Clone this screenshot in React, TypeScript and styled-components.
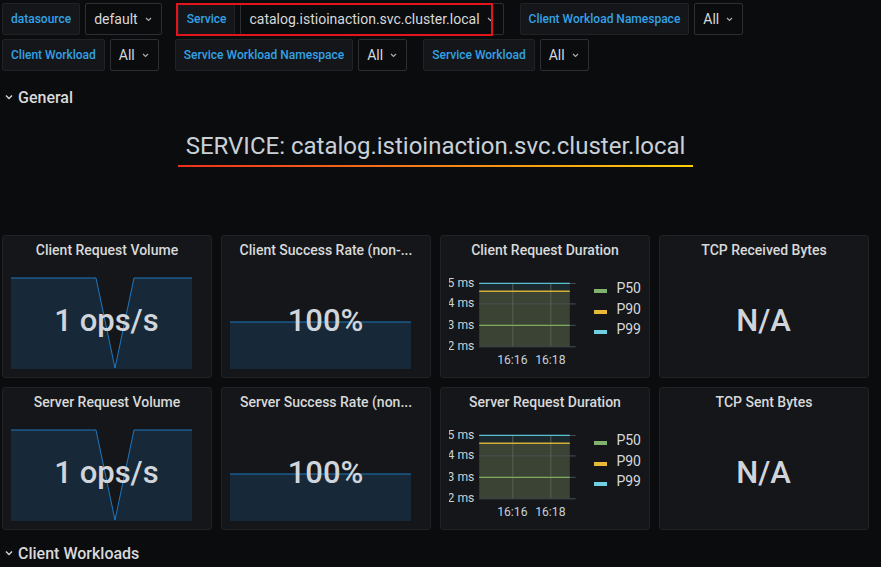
import { FC } from "react";
import styled, { createGlobalStyle } from "styled-components";

const GlobalStyle = createGlobalStyle`
  html, body {
    margin: 0;
    padding: 0;
    background: #0b0c0e;
  }
  body {
    font-family: Roboto, "Liberation Sans", sans-serif;
    color: #d8d9da;
    overflow: hidden;
  }
`;

const Page = styled.div`
  width: 867px;
  padding: 3px 0 0 2px;
`;

const VarBar = styled.div`
  display: flex;
  flex-wrap: wrap;
  row-gap: 4px;
`;

const VarGroup = styled.div<{ $highlight?: boolean }>`
  position: relative;
  display: flex;
  gap: 5px;
  margin-right: 16px;
  height: 32px;

  ${(p) =>
    p.$highlight
      ? `
    &::after {
      content: "";
      position: absolute;
      left: -2px;
      top: 0;
      right: 11px;
      bottom: -1px;
      border: 2px solid #e3141c;
      pointer-events: none;
    }
  `
      : ""}
`;

const VarLabel = styled.div`
  display: flex;
  align-items: center;
  padding: 0 8px;
  background: #141619;
  border: 1px solid #202226;
  border-radius: 2px;
  color: #33a2e5;
  font-size: 12px;
  font-weight: 500;
`;

const VarSelect = styled.div`
  display: flex;
  align-items: center;
  gap: 7px;
  padding: 0 9px 0 8px;
  border: 1px solid #2c3035;
  border-radius: 2px;
  font-size: 14px;
  color: #d8d9da;
`;

const Caret: FC = () => (
  <svg width="7" height="5" viewBox="0 0 7 5">
    <path d="M1 1 L3.5 3.5 L6 1" fill="none" stroke="#a6adb5" strokeWidth="1.2" />
  </svg>
);

const RowHeader = styled.div<{ $top: number }>`
  display: flex;
  align-items: center;
  gap: 5px;
  height: 20px;
  margin-top: ${(p) => p.$top}px;
  padding-left: 3px;
  font-size: 16px;
  font-weight: 500;
  color: #d8d9da;
`;

const TextPanel = styled.div`
  height: 119px;
  display: flex;
  justify-content: center;
  align-items: flex-start;
  padding-top: 25px;
  box-sizing: border-box;
`;

const HeadlineBox = styled.div`
  display: flex;
  flex-direction: column;
`;

const Headline = styled.div`
  padding: 0 8px 6px;
  font-size: 24px;
  line-height: 28px;
  color: #c8d0d8;
`;

const HeadlineRule = styled.div`
  height: 2px;
  margin-top: -1px;
  background: linear-gradient(90deg, #f0301c 0%, #f57a1a 45%, #fbd00b 100%);
`;

const Grid = styled.div`
  margin-top: 9px;
  display: grid;
  grid-template-columns: repeat(4, 210px);
  grid-auto-rows: 143px;
  gap: 9px;
`;

const Panel = styled.div`
  position: relative;
  display: flex;
  flex-direction: column;
  background: #141619;
  border: 1px solid #202226;
  border-radius: 3px;
  box-sizing: border-box;
  padding: 4px 8px 0;
`;

const PanelTitle = styled.div`
  height: 20px;
  line-height: 20px;
  text-align: center;
  font-size: 14px;
  font-weight: 500;
  color: #d8d9da;
  white-space: nowrap;
  overflow: hidden;
`;

const StatBody = styled.div`
  flex: 1;
  display: flex;
  align-items: center;
  justify-content: center;
  padding-top: 3px;
`;

const StatValue = styled.div`
  position: relative;
  font-size: 31px;
  font-weight: 500;
  color: #d0d5db;
  margin-right: 1px;
`;

const Spark = styled.svg`
  position: absolute;
  left: 8px;
  bottom: 8px;
`;

const GraphBody = styled.div`
  display: flex;
  align-items: flex-start;
  padding-top: 10px;
`;

const Legend = styled.div`
  display: flex;
  flex-direction: column;
  margin-left: 9px;
  padding-top: 8px;
`;

const LegendItem = styled.div`
  display: flex;
  align-items: center;
  gap: 9px;
  height: 20.5px;
  font-size: 14px;
  color: #d8d9da;
`;

const Swatch = styled.span<{ $color: string }>`
  display: inline-block;
  width: 13px;
  height: 4px;
  margin-top: 6px;
  background: ${(p) => p.$color};
`;

interface SparkProps {
  points: string;
}

const Sparkline: FC<SparkProps> = ({ points }) => (
  <Spark width="181" height="92" viewBox="0 0 181 92">
    <polygon points={`0,92 ${points} 181,92`} fill="#172838" />
    <polyline points={points} fill="none" stroke="#1f78c1" strokeWidth="1" />
  </Spark>
);

const StatPanel: FC<{ title: string; value: string; points?: string }> = ({
  title,
  value,
  points,
}) => (
  <Panel>
    <PanelTitle>{title}</PanelTitle>
    {points ? <Sparkline points={points} /> : null}
    <StatBody>
      <StatValue>{value}</StatValue>
    </StatBody>
  </Panel>
);

const axisText = { fill: "#c7d0d9", fontSize: 12.5, fontFamily: "Roboto, sans-serif" };

const DurationGraph: FC = () => (
  <svg width="140" height="100" viewBox="0 0 140 100">
    <rect x="31" y="12" width="93" height="8" fill="#1c2a30" />
    <rect x="31" y="20" width="93" height="57" fill="#3a4334" />
    {[12, 33, 55, 77].map((y) => (
      <line key={y} x1="31" x2="130" y1={y + 0.5} y2={y + 0.5} stroke="#4a4f55" strokeWidth="1" />
    ))}
    {[65, 104].map((x) => (
      <line key={x} x1={x + 0.5} x2={x + 0.5} y1="12" y2="77" stroke="#5a6152" strokeWidth="1" />
    ))}
    <line x1="31" x2="124" y1="12.5" y2="12.5" stroke="#5bbfd6" strokeWidth="1.3" />
    <line x1="31" x2="124" y1="20.5" y2="20.5" stroke="#d6ad35" strokeWidth="1.3" />
    <line x1="31" x2="124" y1="55.5" y2="55.5" stroke="#7eab5e" strokeWidth="1.3" />
    {["5 ms", "4 ms", "3 ms", "2 ms"].map((t, i) => (
      <text key={t} x="26" y={[12, 33, 55, 77][i] + 4} textAnchor="end" {...axisText}>
        {t}
      </text>
    ))}
    <text x="65" y="95" textAnchor="middle" {...axisText}>16:16</text>
    <text x="104" y="95" textAnchor="middle" {...axisText}>16:18</text>
  </svg>
);

const GraphPanel: FC<{ title: string }> = ({ title }) => (
  <Panel>
    <PanelTitle>{title}</PanelTitle>
    <GraphBody>
      <DurationGraph />
      <Legend>
        <LegendItem>
          <Swatch $color="#7eb26d" />
          P50
        </LegendItem>
        <LegendItem>
          <Swatch $color="#eab839" />
          P90
        </LegendItem>
        <LegendItem>
          <Swatch $color="#6ed0e0" />
          P99
        </LegendItem>
      </Legend>
    </GraphBody>
  </Panel>
);

const SectionCaret: FC = () => (
  <svg width="8" height="6" viewBox="0 0 8 6">
    <path d="M1 1.5 L4 4.5 L7 1.5" fill="none" stroke="#d8d9da" strokeWidth="1.3" />
  </svg>
);

const VOLUME = "0,1 85,1 104,91 123,1 181,1";
const RATE = "0,45 181,45";

const variables = [
  { label: "datasource", value: "default" },
  { label: "Service", value: "catalog.istioinaction.svc.cluster.local", highlight: true },
  { label: "Client Workload Namespace", value: "All" },
  { label: "Client Workload", value: "All" },
  { label: "Service Workload Namespace", value: "All" },
  { label: "Service Workload", value: "All" },
];

export default function App() {
  return (
    <>
      <GlobalStyle />
      <Page>
        <VarBar>
          {variables.map((v) => (
            <VarGroup key={v.label} $highlight={v.highlight}>
              <VarLabel>{v.label}</VarLabel>
              <VarSelect>
                {v.value}
                <Caret />
              </VarSelect>
            </VarGroup>
          ))}
        </VarBar>

        <RowHeader $top={16}>
          <SectionCaret />
          General
        </RowHeader>

        <TextPanel>
          <HeadlineBox>
            <Headline>SERVICE: catalog.istioinaction.svc.cluster.local</Headline>
            <HeadlineRule />
          </HeadlineBox>
        </TextPanel>

        <Grid>
          <StatPanel title="Client Request Volume" value="1 ops/s" points={VOLUME} />
          <StatPanel title="Client Success Rate (non-..." value="100%" points={RATE} />
          <GraphPanel title="Client Request Duration" />
          <StatPanel title="TCP Received Bytes" value="N/A" />
          <StatPanel title="Server Request Volume" value="1 ops/s" points={VOLUME} />
          <StatPanel title="Server Success Rate (non..." value="100%" points={RATE} />
          <GraphPanel title="Server Request Duration" />
          <StatPanel title="TCP Sent Bytes" value="N/A" />
        </Grid>

        <RowHeader $top={13}>
          <SectionCaret />
          Client Workloads
        </RowHeader>
      </Page>
    </>
  );
}
